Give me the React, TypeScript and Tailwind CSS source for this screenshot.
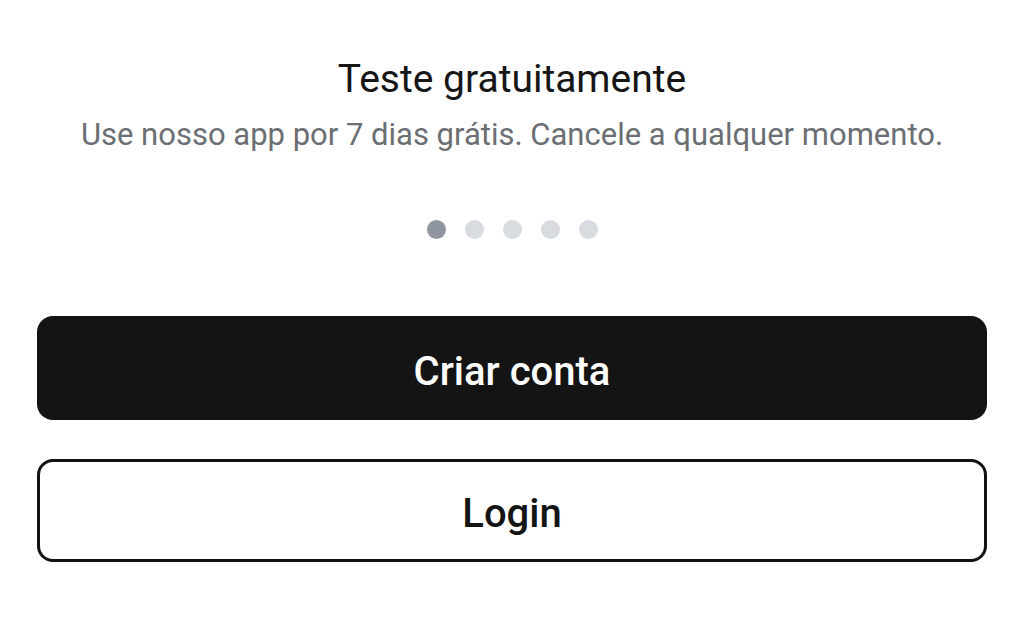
import React from 'react';

const Dots: React.FC<{ count: number; active: number }> = ({ count, active }) => (
  <div className="flex items-center justify-center gap-[19px]">
    {Array.from({ length: count }).map((_, i) => (
      <span
        key={i}
        className={`block h-[19px] w-[19px] rounded-full ${i === active ? 'bg-[#9096a0]' : 'bg-[#d8dbe0]'}`}
      />
    ))}
  </div>
);

export default function App() {
  return (
    <div className="flex h-[631px] w-[1024px] flex-col items-center bg-white pt-[55px] font-['Roboto',sans-serif]">
      <h1 className="text-[39px] leading-[48px] text-[#161616]">Teste gratuitamente</h1>
      <p className="mt-[12px] text-[31px] leading-[40px] text-[#6b6e73]">
        Use nosso app por 7 dias grátis. Cancele a qualquer momento.
      </p>

      <div className="mt-[65px]">
        <Dots count={5} active={0} />
      </div>

      <div className="mt-[77px] flex w-full flex-col gap-[39px] px-[37px]">
        <button className="h-[104px] w-full rounded-[16px] bg-[#141414] pt-[7px] text-[40px] font-medium text-white">
          Criar conta
        </button>
        <button className="h-[103px] w-full rounded-[16px] border-[3px] border-[#111111] bg-white pt-[6px] text-[40px] font-medium text-[#141414]">
          Login
        </button>
      </div>
    </div>
  );
}
